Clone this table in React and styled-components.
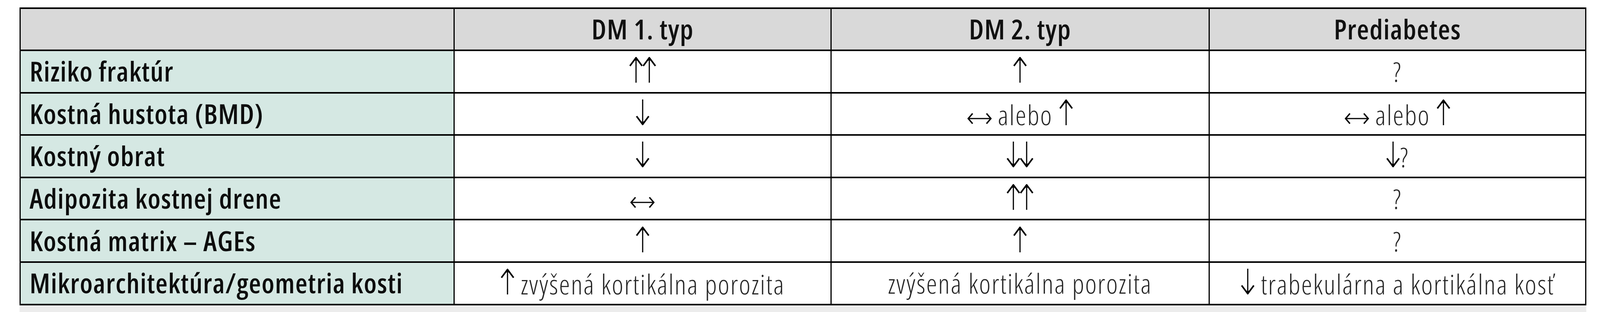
import React from 'react';
import styled, { createGlobalStyle } from 'styled-components';

// table content, arrows are written as glyphs and swapped for svg
const rows = [
    { label: 'Riziko fraktúr', cells: ['↑↑', '↑', '?'] },
    { label: 'Kostná hustota (BMD)', cells: ['↓', '↔ alebo ↑', '↔ alebo ↑'] },
    { label: 'Kostný obrat', cells: ['↓', '↓↓', '↓?'] },
    { label: 'Adipozita kostnej drene', cells: ['↔', '↑↑', '?'] },
    { label: 'Kostná matrix – AGEs', cells: ['↑', '↑', '?'] },
    { label: 'Mikroarchitektúra/geometria kosti', cells: ['↑ zvýšená kortikálna porozita', 'zvýšená kortikálna porozita', '↓ trabekulárna a kortikálna kosť'] },
];

const headers = ['DM 1. typ', 'DM 2. typ', 'Prediabetes'];

const ARROWS = { '↑': 'up', '↓': 'down', '↔': 'lr' };

const Arrow = ({ dir, tight }) => {
    if (dir === 'lr') {
        return (
            <ArrowSvg viewBox="0 0 73 30" preserveAspectRatio="none" $w={73} $h={30} $lift={2}>
                <path d="M3 15 H70" stroke="#000" strokeWidth="3" fill="none" vectorEffect="non-scaling-stroke" />
                <path d="M16 2 L3 15 L16 28 M57 2 L70 15 L57 28" stroke="#000" strokeWidth="3.5" fill="none" vectorEffect="non-scaling-stroke" />
            </ArrowSvg>
        );
    }
    const up = dir === 'up';
    return (
        <ArrowSvg viewBox="0 0 42 66" preserveAspectRatio="none" $w={42} $h={66} $tight={tight}>
            <g transform={up ? undefined : 'rotate(180 21 33)'}>
                <path d="M21 4 V66" stroke="#000" strokeWidth="3" fill="none" vectorEffect="non-scaling-stroke" />
                <path d="M3 23 L21 2 L39 23" stroke="#000" strokeWidth="4" fill="none" vectorEffect="non-scaling-stroke" />
                <path d="M21 0 L15 11 L21 8 L27 11 Z" fill="#000" />
            </g>
        </ArrowSvg>
    );
};

// split a cell string into text and arrow pieces
const renderCell = (text) => {
    const parts = text.split(/([↑↓↔])/).filter(p => p !== '');
    return parts.map((p, i) => {
        if (ARROWS[p]) {
            const tight = i > 0 && ARROWS[parts[i - 1]] !== undefined;
            return <Arrow key={i} dir={ARROWS[p]} tight={tight} />;
        }
        return p;
    });
};

const App = () => {
    return (
        <>
            <GlobalStyle />
            <Page>
                <Table>
                    <HeadCell />
                    {headers.map(h => <HeadCell key={h}>{h}</HeadCell>)}
                    {rows.map(row => (
                        <React.Fragment key={row.label}>
                            <LabelCell>{row.label}</LabelCell>
                            {row.cells.map((c, i) => (
                                <ValueCell key={i}><Content>{renderCell(c)}</Content></ValueCell>
                            ))}
                        </React.Fragment>
                    ))}
                </Table>
                <FootStrip />
            </Page>
        </>
    );
};

export default App;

const GlobalStyle = createGlobalStyle`
    html, body {
        margin: 0;
        background: #fff;
        overflow: hidden;
    }
`;

// one design pixel of the 4722 wide layout, horizontal only
const Page = styled.div`
    --u: calc(100vw / 4722);
    padding: 19px 0 0 calc(var(--u) * 58);
    font-family: "Open Sans", "Noto Sans", sans-serif;
    font-stretch: condensed;
    color: #111;
`;

const Table = styled.div`
    display: grid;
    grid-template-columns: 1281fr 1112fr 1116fr 1112fr;
    grid-template-rows: 108px repeat(6, 108.6px);
    width: calc(var(--u) * 4624);
    border-top: 4px solid #000;
    border-left: 3px solid #000;
    box-sizing: border-box;
`;

const Cell = styled.div`
    display: flex;
    align-items: center;
    min-width: 0;
    border-right: 3px solid #000;
    border-bottom: 4px solid #000;
    line-height: 1;
    white-space: nowrap;
`;

const HeadCell = styled(Cell)`
    justify-content: center;
    background: #d9d9d9;
    font-size: 71px;
    font-weight: 600;
    letter-spacing: 1.5px;
    color: #111;
    padding-bottom: 3px;
`;

const LabelCell = styled(Cell)`
    background: #d5e8e3;
    padding-left: calc(var(--u) * 26);
    padding-bottom: 3px;
    font-size: 71px;
    font-weight: 600;
    letter-spacing: 1.5px;
    color: #0d0d0d;
`;

const ValueCell = styled(Cell)`
    justify-content: center;
    background: #fff;
    font-size: 70px;
    font-weight: 300;
    letter-spacing: 2.6px;
    color: #262626;
`;

const Content = styled.span`
    white-space: pre;
`;

const ArrowSvg = styled.svg`
    display: inline-block;
    width: calc(var(--u) * ${p => p.$w});
    height: ${p => p.$h}px;
    vertical-align: ${p => (p.$lift ? `${p.$lift}px` : 'baseline')};
    margin-left: ${p => (p.$tight ? 'calc(var(--u) * -2)' : '0')};
`;

const FootStrip = styled.div`
    width: calc(var(--u) * 4624);
    height: 40px;
    background: #ececec;
`;
